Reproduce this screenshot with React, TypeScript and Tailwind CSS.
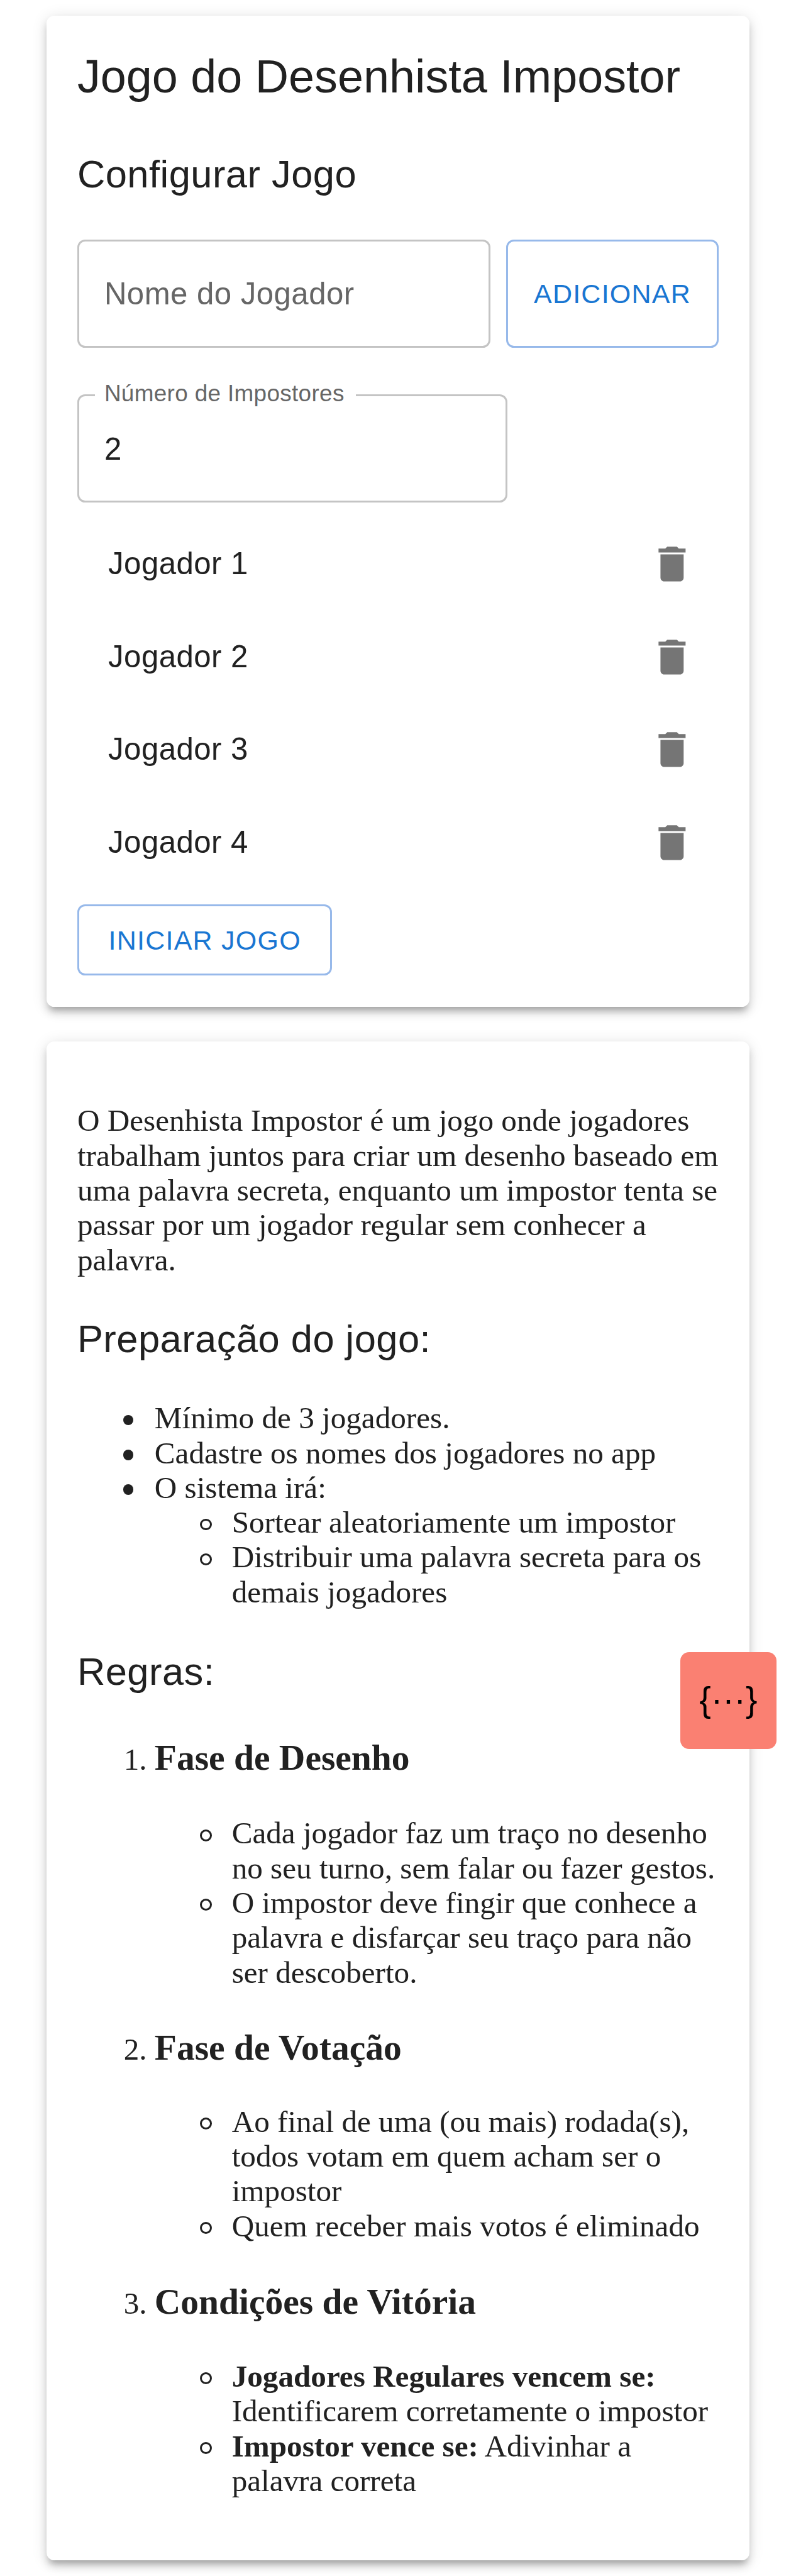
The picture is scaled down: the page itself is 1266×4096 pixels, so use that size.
import type { ReactNode } from "react";

const players = ["Jogador 1", "Jogador 2", "Jogador 3", "Jogador 4"];

function Card({ className, children }: { className: string; children: ReactNode }) {
  return (
    <section
      className={`mx-[73.75px] rounded-[12.3px] bg-white px-[49.15px] shadow-[0_9.2px_9.2px_-6.15px_rgba(0,0,0,0.2),0_9.2px_12.3px_0_rgba(0,0,0,0.14),0_3.1px_24.6px_0_rgba(0,0,0,0.12)] ${className}`}
    >
      {children}
    </section>
  );
}

function Heading({ children }: { children: ReactNode }) {
  return (
    <h2 className="font-['Liberation_Sans',Arial,sans-serif] text-[61.46px] leading-[98.33px] tracking-[0.0075em]">
      {children}
    </h2>
  );
}

function DeleteIcon() {
  return (
    <svg viewBox="0 0 24 24" className="size-[73.75px] fill-[#757575]" aria-hidden="true">
      <path d="M6 19c0 1.1.9 2 2 2h8c1.1 0 2-.9 2-2V7H6zM19 4h-3.5l-1-1h-5l-1 1H5v2h14z" />
    </svg>
  );
}

/* List item with a filled bullet */
function Disc({ children }: { children: ReactNode }) {
  return (
    <li className="relative before:absolute before:top-[22.6px] before:left-[-49.8px] before:size-[16.4px] before:rounded-full before:bg-[#212121]">
      {children}
    </li>
  );
}

/* List item with a hollow bullet */
function Circle({ children }: { children: ReactNode }) {
  return (
    <li className="relative before:absolute before:top-[21.4px] before:left-[-50.9px] before:size-[18.8px] before:rounded-full before:border-[3px] before:border-[#212121]">
      {children}
    </li>
  );
}

function Phase({ title, listClass, children }: { title: string; listClass: string; children: ReactNode }) {
  return (
    <li>
      <h3 className="text-[57.52px] leading-[66.2px] font-bold">{title}</h3>
      <ul className={`list-none pl-[122.9px] ${listClass}`}>{children}</ul>
    </li>
  );
}

export default function App() {
  return (
    <main className="relative h-[4096px] w-[1266px] overflow-hidden bg-white pt-[24.6px] font-['Liberation_Sans',Arial,sans-serif] text-[#212121]">
      <Card className="h-[1576.3px] pt-[48.3px]">
        <h1 className="text-[73.75px] leading-[98.3px]">Jogo do Desenhista Impostor</h1>
        <div className="mt-[56.7px]">
          <Heading>Configurar Jogo</Heading>
        </div>

        <div className="mt-[54.8px] flex h-[172.1px] gap-[24.6px]">
          <div className="flex flex-1 items-center rounded-[12.3px] border-[3px] border-[#c4c4c4] pb-[1px] pl-[40px] text-[49.16px] tracking-[0.00938em] text-[#666666]">
            Nome do Jogador
          </div>
          <button className="w-[338.2px] rounded-[12.3px] border-[3px] border-[#97b9ea] text-[43.02px] tracking-[0.02857em] text-[#1976d2]">
            ADICIONAR
          </button>
        </div>

        <div className="relative mt-[73.75px] flex h-[172.1px] w-[684.5px] items-center rounded-[12.3px] border-[3px] border-[#c4c4c4] pt-[2px] pl-[40px] text-[49.16px]">
          <span className="absolute top-[-30px] left-[25px] bg-white pr-[18px] pl-[15px] text-[36.87px] leading-[52px] tracking-[0.00938em] whitespace-nowrap text-[#666666]">
            Número de Impostores
          </span>
          2
        </div>

        <ul className="py-[24.6px]">
          {players.map((name) => (
            <li
              key={name}
              className="flex h-[147.5px] items-center justify-between pr-[36.9px] pl-[49.16px] text-[49.16px] tracking-[0.00938em]"
            >
              <span className="pb-[2px]">{name}</span>
              <DeleteIcon />
            </li>
          ))}
        </ul>

        <button className="block h-[113px] w-[405.6px] rounded-[12.3px] border-[3px] border-[#97b9ea] text-[43.02px] leading-[50px] tracking-[0.02857em] text-[#1976d2]">
          INICIAR JOGO
        </button>
      </Card>

      <Card className="mt-[55.3px] h-[2414.6px] pt-[98.3px] font-['Liberation_Serif','Times_New_Roman',serif] text-[49.16px] leading-[55.31px]">
        <p className="mb-[49.16px]">
          O Desenhista Impostor é um jogo onde jogadores trabalham juntos para criar um desenho baseado em uma
          palavra secreta, enquanto um impostor tenta se passar por um jogador regular sem conhecer a palavra.
        </p>
        <Heading>Preparação do jogo:</Heading>
        <ul className="mt-[48.7px] mb-[49.6px] list-none pl-[122.9px]">
          <Disc>Mínimo de 3 jogadores.</Disc>
          <Disc>Cadastre os nomes dos jogadores no app</Disc>
          <Disc>
            O sistema irá:
            <ul className="list-none pl-[122.9px]">
              <Circle>Sortear aleatoriamente um impostor</Circle>
              <Circle>Distribuir uma palavra secreta para os demais jogadores</Circle>
            </ul>
          </Disc>
        </ul>
        <Heading>Regras:</Heading>
        <ol className="mt-[55.3px] flex list-decimal flex-col gap-[59.6px] pl-[122.9px]">
          <Phase title="Fase de Desenho" listClass="mt-[58.8px]">
            <Circle>Cada jogador faz um traço no desenho no seu turno, sem falar ou fazer gestos.</Circle>
            <Circle>O impostor deve fingir que conhece a palavra e disfarçar seu traço para não ser descoberto.</Circle>
          </Phase>
          <Phase title="Fase de Votação" listClass="mt-[56.2px]">
            <Circle>Ao final de uma (ou mais) rodada(s), todos votam em quem acham ser o impostor</Circle>
            <Circle>Quem receber mais votos é eliminado</Circle>
          </Phase>
          <Phase title="Condições de Vitória" listClass="mt-[58px]">
            <Circle>
              <strong className="block">Jogadores Regulares vencem se:</strong>
              <span className="block">Identificarem corretamente o impostor</span>
            </Circle>
            <Circle>
              <strong>Impostor vence se:</strong> Adivinhar a palavra correta
            </Circle>
          </Phase>
        </ol>
      </Card>

      <button className="absolute top-[2627.4px] left-[1081.6px] flex size-[153.6px] items-center justify-center rounded-[14px] bg-[#fa8072] pb-[3px] text-[55.31px] text-black">
        {"{···}"}
      </button>
    </main>
  );
}
